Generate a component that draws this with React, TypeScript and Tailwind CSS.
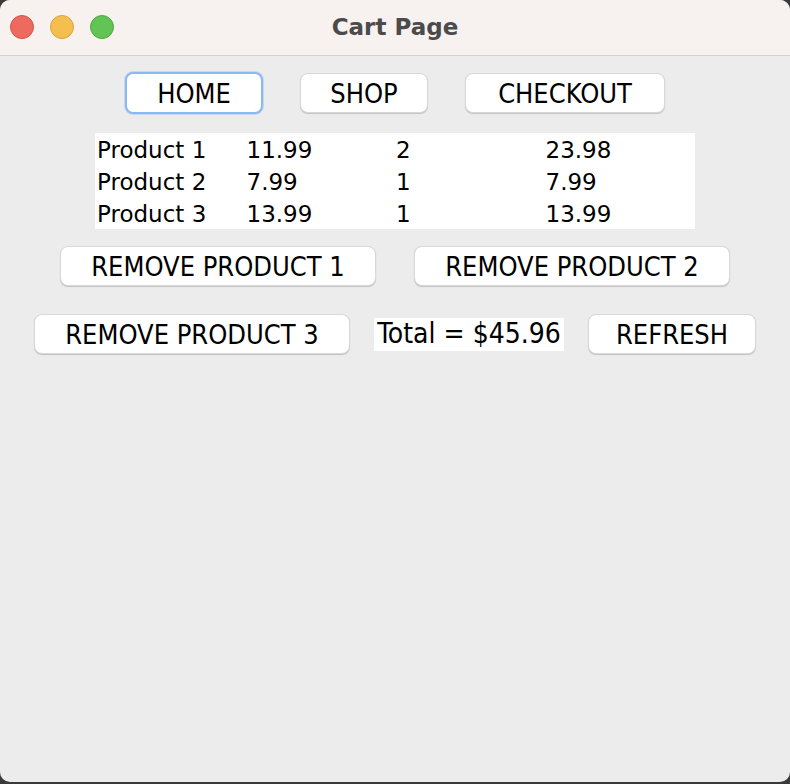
import React from 'react'

const rows = [
  ['Product 1', '11.99', '2', '23.98'],
  ['Product 2', '7.99', '1', '7.99'],
  ['Product 3', '13.99', '1', '13.99'],
]

function Btn({ label, w, focus }: { label: string; w: string; focus?: boolean }) {
  return (
    <button
      className={`${w} h-[40px] bg-white rounded-[8px] text-[27px] leading-none text-black flex items-center justify-center ${
        focus
          ? 'border-[2px] border-[#8ab8f2] shadow-[0_0_0_1px_rgba(138,184,242,0.35)]'
          : 'border border-[#d8d8d8] shadow-[0_1px_1px_rgba(0,0,0,0.18)]'
      }`}
      style={{ fontFamily: '"DejaVu Sans Condensed", "DejaVu Sans", sans-serif', fontStretch: 'condensed' }}
    >
      {label}
    </button>
  )
}

export default function App() {
  return (
    <div className="w-[790px] h-[784px] bg-[#3a3a3a]">
      <div className="w-[790px] h-[782px] rounded-[10px] overflow-hidden bg-[#ececec] flex flex-col">
        {/* Title bar */}
        <div className="relative h-[56px] bg-[#f7f1f0] border-b border-[#d3cfce] flex items-center justify-center shrink-0">
          <div className="absolute left-[10px] top-[15px] flex gap-[16px]">
            <span className="w-[24px] h-[24px] rounded-full bg-[#ee6a5f] border border-[#d55248]" />
            <span className="w-[24px] h-[24px] rounded-full bg-[#f5bf4f] border border-[#d9a23a]" />
            <span className="w-[24px] h-[24px] rounded-full bg-[#61c454] border border-[#4ea83f]" />
          </div>
          <span
            className="text-[23px] font-bold text-[#4b4b4b]"
            style={{ fontFamily: '"DejaVu Sans", sans-serif' }}
          >
            Cart Page
          </span>
        </div>

        {/* Nav row */}
        <div className="flex justify-center items-center gap-[37px] mt-[16px]">
          <Btn label="HOME" w="w-[138px] h-[42px]" focus />
          <Btn label="SHOP" w="w-[128px]" />
          <Btn label="CHECKOUT" w="w-[200px]" />
        </div>

        {/* Table */}
        <div className="flex justify-center mt-[19px]">
          <div
            className="w-[600px] bg-white text-[23px] text-black"
            style={{ fontFamily: '"DejaVu Sans", sans-serif' }}
          >
            {rows.map((r) => (
              <div key={r[0]} className="grid grid-cols-4 h-[32px] items-center pl-[2px]">
                {r.map((c, i) => (
                  <span key={i}>{c}</span>
                ))}
              </div>
            ))}
          </div>
        </div>

        {/* Remove 1 & 2 */}
        <div className="flex justify-center gap-[38px] mt-[17px]">
          <Btn label="REMOVE PRODUCT 1" w="w-[316px]" />
          <Btn label="REMOVE PRODUCT 2" w="w-[316px]" />
        </div>

        {/* Remove 3, total, refresh */}
        <div className="flex justify-center items-center gap-[24px] mt-[28px]">
          <Btn label="REMOVE PRODUCT 3" w="w-[316px]" />
          <div
            className="w-[190px] h-[33px] bg-white flex items-center justify-center text-[28px] leading-none text-black"
            style={{ fontFamily: '"DejaVu Sans Condensed", "DejaVu Sans", sans-serif', fontStretch: 'condensed' }}
          >
            Total = $45.96
          </div>
          <Btn label="REFRESH" w="w-[168px]" />
        </div>
      </div>
    </div>
  )
}
